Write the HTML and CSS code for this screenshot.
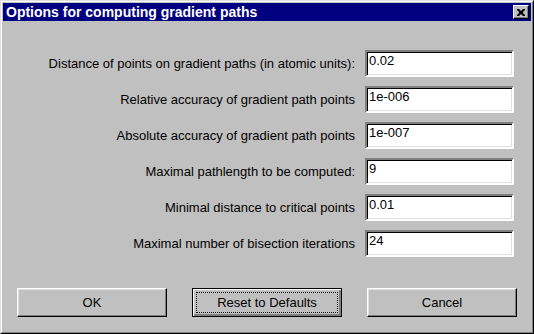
FILE: index.html
```html
<!DOCTYPE html>
<html lang="en">
<head>
    <meta charset="UTF-8">
    <title>Options for computing gradient paths</title>
    <link rel="stylesheet" href="styles.css">
</head>
<body>

    <div class="window">
        <div class="frame">
            <div class="titlebar">
                <span class="title">Options for computing gradient paths</span>
                <span class="close-btn">
                    <svg width="8" height="7" viewBox="0 0 8 7">
                        <path d="M0 0h2l2 2 2-2h2v1l-2 2v1l2 2v1h-2l-2-2-2 2h-2v-1l2-2v-1l-2-2z" fill="#000"/>
                    </svg>
                </span>
            </div>

            <div class="content">
                <div class="fields">
                    <label for="dist">Distance of points on gradient paths (in atomic units):</label>
                    <input type="text" id="dist" value="0.02">

                    <label for="rel">Relative accuracy of gradient path points</label>
                    <input type="text" id="rel" value="1e-006">

                    <label for="abs">Absolute accuracy of gradient path points</label>
                    <input type="text" id="abs" value="1e-007">

                    <label for="maxlen">Maximal pathlength to be computed:</label>
                    <input type="text" id="maxlen" value="9">

                    <label for="mindist">Minimal distance to critical points</label>
                    <input type="text" id="mindist" value="0.01">

                    <label for="bisect">Maximal number of bisection iterations</label>
                    <input type="text" id="bisect" value="24">
                </div>

                <div class="buttons">
                    <button type="button">OK</button>
                    <button type="button" class="default"><span class="focus">Reset to Defaults</span></button>
                    <button type="button">Cancel</button>
                </div>
            </div>
        </div>
    </div>

</body>
</html>
```

FILE: styles.css
```css
body {
    margin: 0;
    padding: 0;
    font-family: "Liberation Sans", Arial, sans-serif;
    background-color: #c0c0c0;
}

.window {
    width: 534px;
    height: 334px;
    box-sizing: border-box;
    background-color: #c0c0c0;
    border: 1px solid;
    border-color: #dfdfdf #000 #000 #dfdfdf;
}

.frame {
    height: 100%;
    box-sizing: border-box;
    border: 1px solid;
    border-color: #fff #808080 #808080 #fff;
    padding: 1px;
    display: flex;
    flex-direction: column;
}

.titlebar {
    height: 18px;
    flex-shrink: 0;
    background-color: #000080;
    color: #fff;
    display: flex;
    align-items: center;
    justify-content: space-between;
    padding: 0 2px 0 3px;
}

.title {
    font-weight: bold;
    font-size: 14px;
}

.close-btn {
    width: 16px;
    height: 14px;
    box-sizing: border-box;
    background-color: #c0c0c0;
    border: 1px solid;
    border-color: #fff #000 #000 #fff;
    box-shadow: inset -1px -1px 0 #808080;
    display: flex;
    align-items: center;
    justify-content: center;
}

.content {
    flex: 1;
    display: flex;
    flex-direction: column;
    padding: 29px 14px 0 14px;
}

.fields {
    display: grid;
    grid-template-columns: 1fr 149px;
    column-gap: 10px;
    row-gap: 9px;
    padding-right: 3px;
    align-items: center;
}

label {
    text-align: right;
    font-size: 13px;
    color: #000;
}

input {
    height: 27px;
    box-sizing: border-box;
    border: 2px solid;
    border-color: #808080 #fff #fff #808080;
    box-shadow: inset 1px 1px 0 #000, inset -1px -1px 0 #dfdfdf;
    background-color: #fff;
    font-family: "Liberation Sans", Arial, sans-serif;
    font-size: 13px;
    padding: 0 0 6px 2px;
    margin: 0;
    outline: none;
}

.buttons {
    display: flex;
    justify-content: space-between;
    margin-top: 31px;
}

button {
    width: 150px;
    height: 29px;
    box-sizing: border-box;
    background-color: #c0c0c0;
    border: 1px solid;
    border-color: #fff #000 #000 #fff;
    box-shadow: inset -1px -1px 0 #808080, inset 1px 1px 0 #dfdfdf;
    font-family: "Liberation Sans", Arial, sans-serif;
    font-size: 13px;
    color: #000;
    padding: 0;
}

button.default {
    border: 1px solid #000;
    box-shadow: inset 1px 1px 0 #fff, inset -2px -2px 0 #808080, inset -1px -1px 0 #000;
    padding: 3px;
}

.focus {
    display: flex;
    align-items: center;
    justify-content: center;
    height: 100%;
    border: 1px dotted #000;
    box-sizing: border-box;
}
```
